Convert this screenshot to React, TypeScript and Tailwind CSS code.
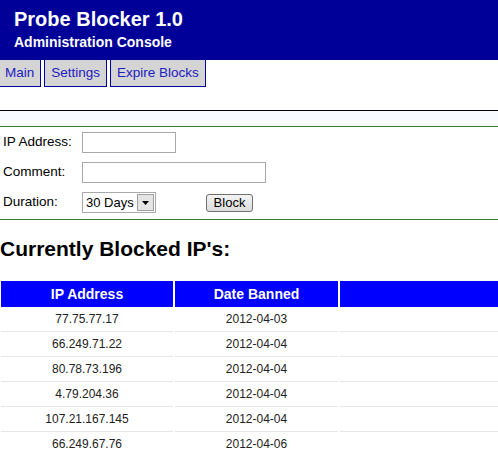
const rows = [
  { ip: "77.75.77.17", date: "2012-04-03" },
  { ip: "66.249.71.22", date: "2012-04-04" },
  { ip: "80.78.73.196", date: "2012-04-04" },
  { ip: "4.79.204.36", date: "2012-04-04" },
  { ip: "107.21.167.145", date: "2012-04-04" },
  { ip: "66.249.67.76", date: "2012-04-06" },
];

const tabs = ["Main", "Settings", "Expire Blocks"];

export default function App() {
  return (
    <div className="w-[498px] h-[454px] overflow-hidden bg-white font-['Liberation_Sans',Arial,sans-serif] text-black">
      {/* Header */}
      <div className="h-[60px] bg-[#000099] pl-[14px] pt-[8px] text-white font-bold">
        <div className="text-[20px] leading-[23px]">Probe Blocker 1.0</div>
        <div className="mt-[3px] text-[14px] leading-[16px]">Administration Console</div>
      </div>

      {/* Tabs */}
      <div className="flex gap-[3px]">
        {tabs.map((t, i) => (
          <div
            key={t}
            className={`h-[27px] border-x border-b border-[#0000a0] bg-[#d4d4d4] px-[6px] text-[13.5px] leading-[26px] text-[#2020c0] ${i === 0 ? "-ml-[2px]" : ""}`}
          >
            {t}
          </div>
        ))}
      </div>

      <div className="mt-[23px] h-[16px] border-t border-black bg-[#f8fbff]" />

      {/* Block form */}
      <div className="flex flex-col gap-[9px] border-y border-[#347a34] pl-[3px] pt-[5px] pb-[6px] text-[13.5px]">
        <div className="flex h-[21px] items-center">
          <div className="w-[79px]">IP Address:</div>
          <div className="h-[21px] w-[94px] border border-[#a9a9a9] bg-white" />
        </div>
        <div className="flex h-[21px] items-center">
          <div className="w-[79px]">Comment:</div>
          <div className="h-[21px] w-[184px] border border-[#a9a9a9] bg-white" />
        </div>
        <div className="flex h-[21px] items-center">
          <div className="w-[79px]">Duration:</div>
          <div className="flex h-[21px] w-[74px] items-center justify-between border border-[#a9a9a9] bg-white pl-[3px] pr-px text-[13px]">
            <span>30 Days</span>
            <span className="flex h-[17px] w-[17px] items-center justify-center border border-[#a0a0a0] bg-[#e4e4e4]">
              <svg width="7" height="4" viewBox="0 0 7 4">
                <path d="M0 0h7L3.5 4z" fill="#000" />
              </svg>
            </span>
          </div>
          <button className="ml-[50px] h-[18px] w-[47px] rounded-[3px] border border-[#707070] bg-gradient-to-b from-[#f4f4f4] to-[#dcdcdc] text-[13px] leading-[16px]">
            Block
          </button>
        </div>
      </div>

      <h2 className="mt-[17px] text-[21px] font-bold leading-[24px]">Currently Blocked IP's:</h2>

      {/* Table */}
      <div className="mt-[20px] grid grid-cols-[172px_163px_1fr] gap-x-[2px] pl-px text-center">
        <div className="h-[26px] bg-[#0000ff] text-[14px] font-bold leading-[26px] text-white">IP Address</div>
        <div className="h-[26px] bg-[#0000ff] text-[14px] font-bold leading-[26px] text-white">Date Banned</div>
        <div className="h-[26px] bg-[#0000ff]" />
        {rows.map((r) => (
          <div key={r.ip} className="contents">
            <div className="h-[25px] border-b border-[#e6e6e6] text-[12px] leading-[24px] text-[#222]">{r.ip}</div>
            <div className="h-[25px] border-b border-[#e6e6e6] text-[12px] leading-[24px] text-[#222]">{r.date}</div>
            <div className="h-[25px] border-b border-[#e6e6e6]" />
          </div>
        ))}
      </div>
    </div>
  );
}
